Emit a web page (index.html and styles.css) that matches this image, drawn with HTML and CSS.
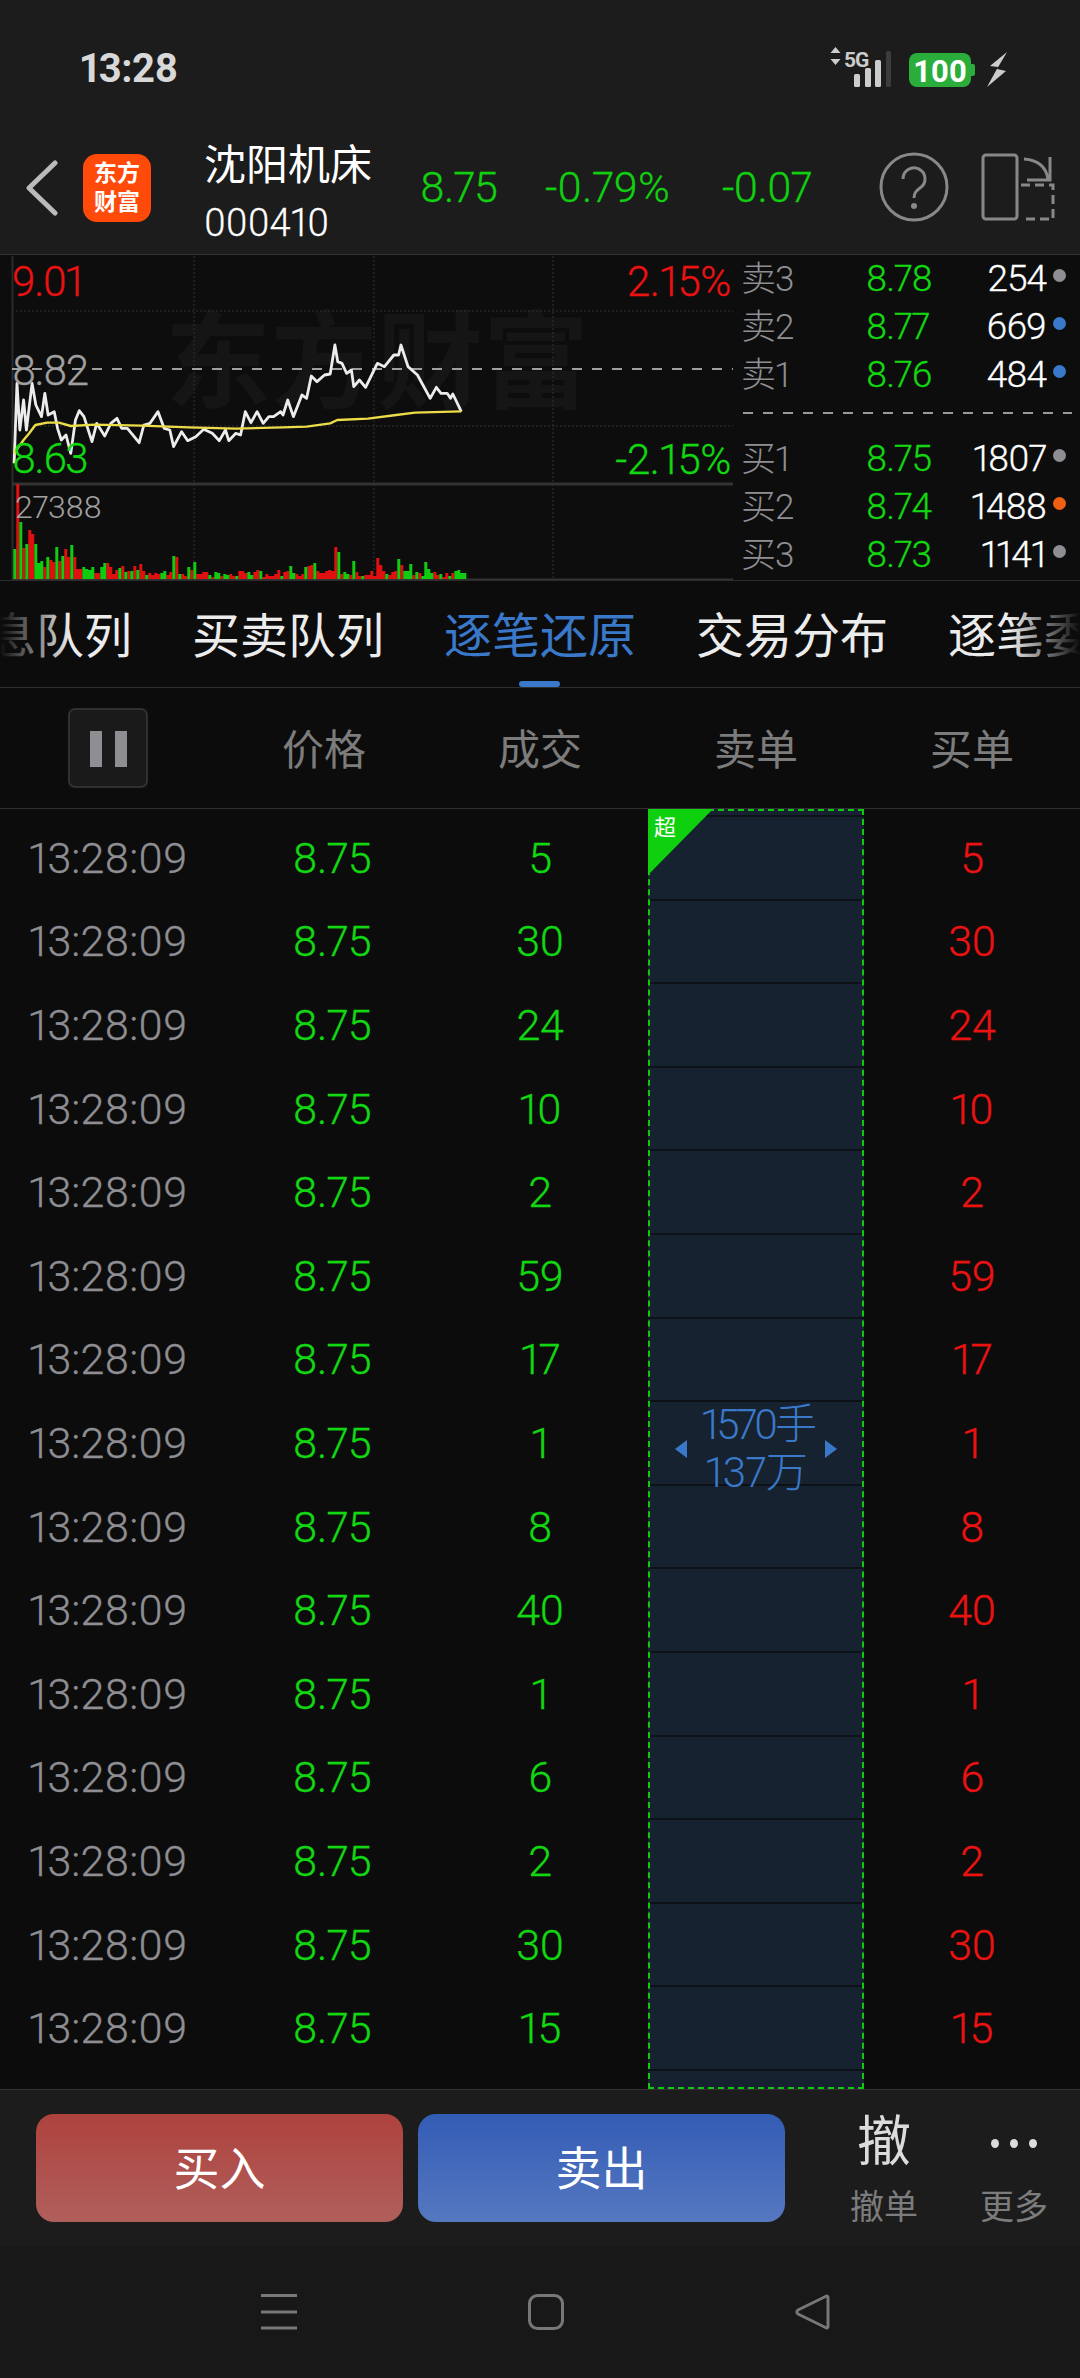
FILE: index.html
```
<!DOCTYPE html>
<html lang="zh">
<head>
<meta charset="utf-8">
<title>沈阳机床</title>
<link rel="stylesheet" href="styles.css">
</head>
<body>
<div class="page">
  <div class="status">
    <span class="clock">13:28</span>
    <svg class="status-icons" width="187" height="50" viewBox="825 45 187 50">
      <path d="M835.500 47l5 6h-10zM835.500 65l5-6h-10z" fill="#ccc"/>
      <text x="844" y="67" class="net">5G</text>
      <rect x="854" y="74" width="6" height="13" rx="1.500" fill="#ccc"/>
      <rect x="865" y="68" width="6" height="19" rx="1.500" fill="#ccc"/>
      <rect x="875" y="60" width="6" height="27" rx="1.500" fill="#ccc"/>
      <rect x="886" y="51" width="5" height="36" rx="1.500" fill="#3c3c3c"/>
      <rect x="909" y="53" width="62" height="34" rx="8" fill="#2bad3c"/>
      <path d="M971 64h2a2 2 0 0 1 2 2v8a2 2 0 0 1-2 2h-2z" fill="#2bad3c"/>
      <text x="940" y="82" class="batt">100</text>
      <path d="M1007 52l-17 14 8 1-11 20 19-16-9-2z" fill="#ccc"/>
    </svg>
  </div>

  <header class="header">
    <svg class="back" width="34" height="56" viewBox="0 0 34 56"><path d="M30 3L4 28l26 25" fill="none" stroke="#bbb" stroke-width="5" stroke-linecap="round" stroke-linejoin="round"/></svg>
    <div class="logo"><span>东方</span><span>财富</span></div>
    <div class="title">
      <div class="name">沈阳机床</div>
      <div class="code">000410</div>
    </div>
    <div class="quotes">
      <span class="q1">8.75</span>
      <span class="q2">-0.79%</span>
      <span class="q3">-0.07</span>
    </div>
    <svg class="help" width="70" height="70" viewBox="0 0 70 70">
      <circle cx="35" cy="35" r="33" fill="none" stroke="#888" stroke-width="3"/>
      <path d="M24 27a11 11 0 1 1 17 9c-4 3-6 5-6 10" fill="none" stroke="#888" stroke-width="3"/>
      <circle cx="35" cy="54" r="3" fill="#888"/>
    </svg>
    <svg class="split" width="74" height="68" viewBox="981 153 74 68" fill="none" stroke="#888" stroke-width="3">
      <rect x="983" y="155" width="34" height="64" rx="3"/>
      <path d="M1021 185h32v34h-32" stroke-dasharray="9 5"/>
      <path d="M1024 159c14 1 22 8 24 20M1050 157v23h-23"/>
    </svg>
  </header>

  <section class="market">
    <div class="chart">
      <div class="watermark">东方财富</div>
      <svg class="plot" width="733" height="326" viewBox="0 255 733 326">
        <g fill="none" stroke="#333" stroke-width="1">
          <path d="M12 311H733M12 426H733" stroke-dasharray="2 2"/>
          <path d="M194 256V580M374 256V580M553 256V580" stroke-dasharray="2 2"/>
        </g>
        <path d="M12.500 256V580" stroke="#2a2a2a" stroke-width="2"/>
        <path d="M12 484H733" stroke="#333" stroke-width="3"/>
        <path d="M12 580H733" stroke="#333" stroke-width="3"/>
        <path d="M12 369H733" stroke="#a0a0a0" stroke-width="2" stroke-dasharray="10 10"/>
        <g transform="translate(0 250) scale(.4717 .33333)" fill="none" stroke-linejoin="round">
          <path class="price-line" d="M30 640L36 400 42 540 50 450 56 540 62 470 68 400 76 465 88 500 95 430 102 495 115 485 122 535 130 570 140 555 150 610 160 510 168 482 178 500 195 575 205 520 222 558 235 520 248 505 258 535 270 535 295 578 305 525 318 520 335 485 348 535 360 540 368 590 385 545 398 572 415 560 432 538 450 550 465 572 478 540 485 572 500 550 510 555 520 485 532 518 545 485 558 520 570 500 580 500 595 485 600 495 610 450 622 500 640 435 650 445 660 378 672 395 688 375 700 372 710 285 716 335 725 340 735 370 745 360 750 410 762 390 775 412 800 340 815 350 835 315 845 315 850 285 865 350 885 375 912 445 925 412 935 430 948 430 955 445 960 432 978 485"/>
          <path class="avg-line" d="M30 610L50 570 62 550 75 525 100 518 125 518 150 528 200 524 300 527 400 532 500 536 600 532 650 530 700 520 715 510 780 506 840 495 880 488 978 484"/>
        </g>
        <g transform="translate(14.800 579) scale(3 -1)" fill="none">
          <path class="bar-red" d="M1 0V95M3 0V31M5 0V49M6 0V45M10 0V12M12 0V19M13 0V17M15 0V18M17 0V30M18 0V22M20 0V22M21 0V10M22 0V10M27 0V6M28 0V6M31 0V16M32 0V12M33 0V5M34 0V9M36 0V13M38 0V8M40 0V13M42 0V15M43 0V8M45 0V6M46 0V4M47 0V6M48 0V5M51 0V4M52 0V7M54 0V22M56 0V5M57 0V3M59 0V9M61 0V5M62 0V5M63 0V7M64 0V7M66 0V2M69 0V3M72 0V5M73 0V3M75 0V8M76 0V8M77 0V6M80 0V7M81 0V9M83 0V2M84 0V5M85 0V3M86 0V3M87 0V5M88 0V9M90 0V7M91 0V8M94 0V5M95 0V3M96 0V5M98 0V13M99 0V14M101 0V8M102 0V6M103 0V6M104 0V8M105 0V9M106 0V8M107 0V32M109 0V5M112 0V4M114 0V7M115 0V3M117 0V4M118 0V4M119 0V8M120 0V3M121 0V21M122 0V14M123 0V8M125 0V4M126 0V7M127 0V8M129 0V14M133 0V4M135 0V6M140 0V7M141 0V4M143 0V2M144 0V6M146 0V6"/>
          <path class="bar-green" d="M0 0V30M2 0V57M4 0V35M7 0V35M8 0V16M9 0V18M11 0V22M14 0V32M16 0V23M19 0V34M23 0V12M24 0V10M25 0V9M26 0V12M29 0V12M30 0V16M35 0V11M37 0V7M39 0V8M41 0V9M44 0V4M49 0V6M50 0V8M53 0V23M55 0V5M58 0V12M60 0V17M65 0V4M67 0V7M68 0V6M70 0V5M71 0V4M74 0V3M78 0V7M79 0V4M82 0V8M89 0V3M92 0V13M93 0V6M97 0V12M100 0V16M108 0V27M110 0V7M111 0V5M113 0V18M116 0V3M124 0V5M128 0V20M130 0V8M131 0V8M132 0V15M134 0V7M136 0V3M137 0V17M138 0V10M139 0V6M142 0V5M145 0V3M147 0V8M148 0V9M149 0V6M150 0V6"/>
        </g>
      </svg>
      <span class="lbl lbl-high">9.01</span>
      <span class="lbl lbl-mid">8.82</span>
      <span class="lbl lbl-low">8.63</span>
      <span class="pct pct-up">2.15%</span>
      <span class="pct pct-down">-2.15%</span>
      <span class="vol-max">27388</span>
    </div>
    <div class="book">
      <div class="book-row"><span class="b-label">卖3</span><span class="b-price">8.78</span><span class="b-vol">254</span><i class="dot dot-gray"></i></div>
      <div class="book-row"><span class="b-label">卖2</span><span class="b-price">8.77</span><span class="b-vol">669</span><i class="dot dot-blue"></i></div>
      <div class="book-row"><span class="b-label">卖1</span><span class="b-price">8.76</span><span class="b-vol">484</span><i class="dot dot-blue"></i></div>
      <div class="book-sep"></div>
      <div class="book-row"><span class="b-label">买1</span><span class="b-price">8.75</span><span class="b-vol">1807</span><i class="dot dot-gray"></i></div>
      <div class="book-row"><span class="b-label">买2</span><span class="b-price">8.74</span><span class="b-vol">1488</span><i class="dot dot-orange"></i></div>
      <div class="book-row"><span class="b-label">买3</span><span class="b-price">8.73</span><span class="b-vol">1141</span><i class="dot dot-gray"></i></div>
    </div>
  </section>

  <nav class="tabs">
    <span class="tab">消息队列</span>
    <span class="tab">买卖队列</span>
    <span class="tab tab-active">逐笔还原</span>
    <span class="tab">交易分布</span>
    <span class="tab">逐笔委托</span>
    <i class="fade fade-l"></i>
    <i class="fade fade-r"></i>
    <i class="tab-mark"></i>
  </nav>

  <div class="thead">
    <div class="cell"><span class="pause"><i></i><i></i></span></div>
    <div class="cell">价格</div>
    <div class="cell">成交</div>
    <div class="cell">卖单</div>
    <div class="cell">买单</div>
  </div>

  <div class="table">
    <div class="rows">
      <div class="row"><span class="t">13:28:09</span><span class="p">8.75</span><span class="v">5</span><span></span><span class="b">5</span></div>
      <div class="row"><span class="t">13:28:09</span><span class="p">8.75</span><span class="v">30</span><span></span><span class="b">30</span></div>
      <div class="row"><span class="t">13:28:09</span><span class="p">8.75</span><span class="v">24</span><span></span><span class="b">24</span></div>
      <div class="row"><span class="t">13:28:09</span><span class="p">8.75</span><span class="v">10</span><span></span><span class="b">10</span></div>
      <div class="row"><span class="t">13:28:09</span><span class="p">8.75</span><span class="v">2</span><span></span><span class="b">2</span></div>
      <div class="row"><span class="t">13:28:09</span><span class="p">8.75</span><span class="v">59</span><span></span><span class="b">59</span></div>
      <div class="row"><span class="t">13:28:09</span><span class="p">8.75</span><span class="v">17</span><span></span><span class="b">17</span></div>
      <div class="row"><span class="t">13:28:09</span><span class="p">8.75</span><span class="v">1</span><span></span><span class="b">1</span></div>
      <div class="row"><span class="t">13:28:09</span><span class="p">8.75</span><span class="v">8</span><span></span><span class="b">8</span></div>
      <div class="row"><span class="t">13:28:09</span><span class="p">8.75</span><span class="v">40</span><span></span><span class="b">40</span></div>
      <div class="row"><span class="t">13:28:09</span><span class="p">8.75</span><span class="v">1</span><span></span><span class="b">1</span></div>
      <div class="row"><span class="t">13:28:09</span><span class="p">8.75</span><span class="v">6</span><span></span><span class="b">6</span></div>
      <div class="row"><span class="t">13:28:09</span><span class="p">8.75</span><span class="v">2</span><span></span><span class="b">2</span></div>
      <div class="row"><span class="t">13:28:09</span><span class="p">8.75</span><span class="v">30</span><span></span><span class="b">30</span></div>
      <div class="row"><span class="t">13:28:09</span><span class="p">8.75</span><span class="v">15</span><span></span><span class="b">15</span></div>
    </div>
    <div class="merge">
      <i class="arrow arrow-l"></i>
      <div class="merge-text"><div class="merge-vol">1570手</div><div>137万</div></div>
      <i class="arrow arrow-r"></i>
      <div class="corner"></div>
      <span class="corner-text">超</span>
    </div>
  </div>

  <footer class="footer">
    <button class="btn btn-buy">买入</button>
    <button class="btn btn-sell">卖出</button>
    <div class="action action-first">
      <div class="action-icon">撤</div>
      <div class="action-label">撤单</div>
    </div>
    <div class="action">
      <div class="action-icon"><span class="dots"><i></i><i></i><i></i></span></div>
      <div class="action-label">更多</div>
    </div>
  </footer>

  <div class="navbar">
    <svg width="36" height="36" viewBox="0 0 36 36"><path d="M0 1.500H36M0 18H36M0 34H36" stroke="#777" stroke-width="3"/></svg>
    <svg width="36" height="36" viewBox="0 0 36 36"><rect x="1.500" y="1.500" width="33" height="33" rx="8" fill="none" stroke="#777" stroke-width="3"/></svg>
    <svg width="36" height="36" viewBox="0 0 36 36"><path d="M33 3.500c0-1.500-1.500-2-2.500-1L3 16c-1.500 1-1.500 3 0 4l27.500 13.500c1 .8 2.500.3 2.500-1z" fill="none" stroke="#777" stroke-width="3" stroke-linejoin="round"/></svg>
  </div>
</div>
</body>
</html>
```

FILE: styles.css
```
* { box-sizing: border-box; }
html, body { margin: 0; padding: 0; background: #0c0c0c; }
body { font-family: Roboto, "Noto Sans CJK SC", sans-serif; font-weight: 300; font-variant-numeric: proportional-nums; }
i { display: block; font-style: normal; }
.page { width: 1080px; height: 2378px; overflow: hidden; display: flex; flex-direction: column; }

/* status bar */
.status { height: 135px; background: #1c1c1c; display: flex; align-items: flex-start; padding: 47px 68px 0 80px; }
.clock { font-size: 40px; line-height: 44px; font-weight: 700; color: #d8d8d8; letter-spacing: -0.5px; }
.status-icons { margin: -2px 0 0 auto; }
.net { font: 700 21px Roboto, sans-serif; fill: #ccc; letter-spacing: -1px; }
.batt { font: 700 31px Roboto, sans-serif; fill: #fff; text-anchor: middle; }

/* header */
.header { height: 120px; background: #1c1c1c; border-bottom: 1px solid #333; display: flex; align-items: flex-start; }
.back { margin: 25px 0 0 25px; flex: none; }
.logo { width: 68px; height: 68px; margin: 19px 0 0 24px; flex: none; border-radius: 14px; background: #ff4a0a; color: #fff; font-size: 23px; line-height: 29px; font-weight: 700; display: flex; flex-direction: column; align-items: center; justify-content: center; }
.title { margin: 6px 0 0 53px; width: 216px; flex: none; color: #fff; }
.name { font-size: 42px; line-height: 50px; font-weight: 400; white-space: nowrap; }
.code { font-size: 38px; line-height: 46px; margin-top: 9px; letter-spacing: 0; -webkit-text-stroke: 0.3px #fff; }
.quotes { display: flex; margin-top: 29px; color: #10d010; font-size: 43px; line-height: 46px; letter-spacing: -0.8px; width: 459px; flex: none; -webkit-text-stroke: 0.3px #10d010; }
.q1 { width: 125px; }
.q2 { width: 177px; letter-spacing: 0; }
.help { margin: 17px 0 0 0; flex: none; }
.split { margin: 18px 0 0 32px; flex: none; }

/* market */
.market { height: 326px; display: flex; border-bottom: 1px solid #2c2c2c; background: #0d0d0d; }
.chart { width: 733px; height: 325px; position: relative; flex: none; overflow: hidden; }
.plot { position: absolute; left: 0; top: 0; }
.watermark { position: absolute; left: 165px; top: 54px; font-size: 106px; line-height: 110px; font-weight: 700; color: #151515; white-space: nowrap; }
.price-line { stroke: #ececec; stroke-width: 2.8; vector-effect: non-scaling-stroke; }
.avg-line { stroke: #ecdc48; stroke-width: 2.4; vector-effect: non-scaling-stroke; }
.bar-red { stroke: #e01010; stroke-width: 3; vector-effect: non-scaling-stroke; }
.bar-green { stroke: #10cc10; stroke-width: 3; vector-effect: non-scaling-stroke; }
.lbl, .pct { position: absolute; font-size: 42px; line-height: 40px; white-space: nowrap; -webkit-text-stroke: 0.3px currentColor; }
.lbl { left: 12px; letter-spacing: -1.5px; }
.pct { right: 2px; letter-spacing: -0.4px; }
.lbl-high { top: 7px; color: #ec1212; }
.lbl-mid { top: 96px; color: #a0a0a0; }
.lbl-low { top: 184px; color: #12d812; }
.pct-up { top: 7px; color: #ec1212; }
.pct-down { top: 185px; color: #12d812; }
.vol-max { position: absolute; left: 15px; top: 237px; font-size: 32px; line-height: 30px; color: #a0a0a0; letter-spacing: -0.3px; }

/* order book */
.book { flex: 1; margin-top: -1px; padding-left: 10px; }
.book-row { height: 48px; display: flex; align-items: center; white-space: nowrap; }
.b-label { width: 123px; font-size: 35px; line-height: 44px; margin: 4px 0 0 -2px; color: #8e8e93; letter-spacing: -1px; flex: none; }
.b-price { width: 82px; font-size: 37px; color: #12d812; letter-spacing: -1px; margin-left: 2px; flex: none; -webkit-text-stroke: 0.3px #12d812; }
.b-vol { width: 98px; text-align: right; font-size: 37px; color: #fff; letter-spacing: -1px; flex: none; -webkit-text-stroke: 0.3px #fff; }
.dot { width: 13px; height: 13px; border-radius: 50%; margin: 0 0 6px 7px; flex: none; }
.dot-gray { background: #8e8e93; }
.dot-blue { background: #3a78c9; }
.dot-orange { background: #ee5f12; }
.book-sep { height: 2px; margin: 14px 8px 20px 0; background: repeating-linear-gradient(90deg, #999 0 10px, transparent 10px 20px); }

/* tabs */
.tabs { height: 107px; border-bottom: 1px solid #2e2e2e; background: #0c0c0c; position: relative; overflow: hidden; display: flex; gap: 60px; align-items: center; }
.tab { flex: none; width: 192px; font-size: 48px; line-height: 60px; color: #ececec; white-space: nowrap; font-weight: 400; position: relative; left: -60px; top: 3px; }
.tab-active { color: #3a78c9; }
.fade { position: absolute; top: 0; bottom: 0; width: 70px; }
.fade-l { left: 0; background: linear-gradient(90deg, #0c0c0c, rgba(12,12,12,0)); }
.fade-r { right: 0; background: linear-gradient(270deg, #0c0c0c, rgba(12,12,12,0)); }
.tab-mark { position: absolute; left: 519px; bottom: 0; width: 41px; height: 6px; border-radius: 3px; background: #3a78c9; }

/* table head */
.thead { height: 121px; border-bottom: 1px solid #2e2e2e; display: grid; grid-template-columns: repeat(5, 216px); align-items: center; background: #0c0c0c; }
.cell { text-align: center; font-size: 42px; line-height: 52px; margin-top: 5px; color: #7c7c7c; font-weight: 400; }
.cell:first-child { margin-top: 0; }
.pause { display: flex; gap: 13px; justify-content: center; padding-top: 21px; width: 80px; height: 80px; margin: 0 0 0 68px; background: #1a1a1a; border: 2px solid #303030; border-radius: 7px; }
.pause i { width: 12px; height: 36px; background: #8e8e93; }

/* ticks */
.table { height: 1280px; position: relative; background: #0c0c0c; }
.rows { padding-top: 7px; }
.row { height: 83.6px; display: grid; grid-template-columns: repeat(5, 216px); align-items: center; text-align: center; font-size: 43px; letter-spacing: -0.4px; -webkit-text-stroke: 0.3px currentColor; }
.t { color: #8e8e93; letter-spacing: 0.1px; }
.p { color: #12d812; padding-left: 16px; }
.v { color: #12d812; }
.b { color: #ec1212; }
.merge { position: absolute; left: 648px; top: 0; bottom: 0; width: 216px; border: 2px dashed #10c810; background-color: #16222f; background-image: repeating-linear-gradient(180deg, #0c1218 0 2px, transparent 2px 83.6px); background-position: 0 4px; display: flex; align-items: center; justify-content: center; gap: 14px; }
.merge-text { text-align: center; font-size: 42px; line-height: 48px; color: #3a78c9; letter-spacing: -0.6px; white-space: nowrap; width: 110px; }
.merge-vol { letter-spacing: -3.2px; }
.arrow { width: 0; height: 0; border-top: 9px solid transparent; border-bottom: 9px solid transparent; flex: none; }
.arrow-l { border-right: 12px solid #3a78c9; }
.arrow-r { border-left: 12px solid #3a78c9; }
.corner { position: absolute; left: -2px; top: -2px; width: 65px; height: 66px; background: #0fd00f; clip-path: polygon(0 0, 100% 0, 0 100%); }
.corner-text { position: absolute; left: 4px; top: 4px; font-size: 22px; line-height: 26px; color: #fff; font-weight: 400; }

/* footer */
.footer { height: 157px; background: #1c1c1c; border-top: 1px solid #333; display: flex; align-items: flex-start; padding: 24px 0 0 36px; gap: 15px; }
.btn { width: 367px; height: 108px; border: 0; border-radius: 18px; color: #fff; font-family: inherit; font-size: 46px; line-height: 50px; font-weight: 400; padding: 2px 0 0; flex: none; }
.btn-buy { background: linear-gradient(180deg, #ae423e, #b05f5b); }
.btn-sell { background: linear-gradient(180deg, #335cb5, #5678c0); }
.action { width: 130px; flex: none; margin-top: -6px; text-align: center; margin-left: -15px; }
.action-first { margin-left: 19px; }
.action-icon { height: 70px; font-size: 54px; line-height: 70px; color: #dcdcdc; font-weight: 400; display: flex; align-items: center; justify-content: center; }
.action-label { font-size: 34px; line-height: 40px; margin-top: 9px; color: #7c7c7c; font-weight: 400; }
.dots { display: flex; gap: 11px; }
.dots i { width: 8px; height: 9px; border-radius: 50%; background: #dcdcdc; }

/* nav */
.navbar { height: 132px; background: #181818; display: flex; align-items: flex-start; gap: 231px; padding: 48px 0 0 261px; }
```
